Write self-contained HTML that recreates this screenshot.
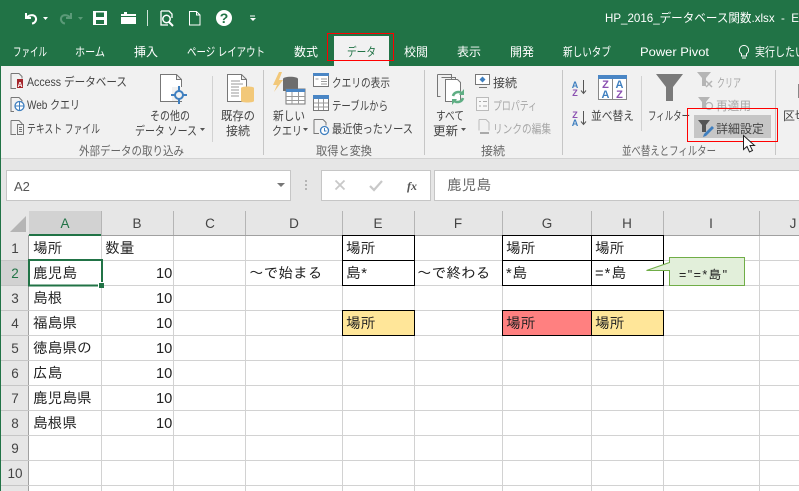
<!DOCTYPE html>
<html lang="ja"><head><meta charset="utf-8"><style>
html,body{margin:0;padding:0;width:799px;height:491px;overflow:hidden;background:#fff}
svg{display:block;position:absolute;left:0;top:0}
.r{font-family:"Liberation Sans","Noto Sans CJK JP",sans-serif;font-size:12px;fill:#444}
.t{font-family:"Liberation Sans","Noto Sans CJK JP",sans-serif;font-size:12px;fill:#fff}
.g{fill:#a6a6a6}
.c{font-family:"Liberation Sans","IPAGothic",sans-serif;font-size:14.67px;fill:#222}
.h{font-family:"Liberation Sans","Noto Sans CJK JP",sans-serif;font-size:13.5px;fill:#444;text-anchor:middle}
</style></head><body>
<svg width="799" height="491" viewBox="0 0 799 491" xmlns="http://www.w3.org/2000/svg">
<rect width="799" height="491" fill="#fff"/>
<!-- title bar -->
<rect width="799" height="66" fill="#217346"/>
<!-- QAT -->
<path d="M26 13v5h5M26.500 18c2-3 7-4 9-1 1.500 2.500 0 6-3.500 6.500" fill="none" stroke="#fff" stroke-width="2"/>
<path d="M43 17h5l-2.500 3z" fill="#fff"/>
<path d="M71 13v5h-5M70.500 18c-2-3-7-4-9-1-1.500 2.500 0 6 3.500 6.500" fill="none" stroke="#5b9a78" stroke-width="2"/>
<path d="M78 17h5l-2.500 3z" fill="#5b9a78"/>
<path d="M93 11h14v14h-14z M96 12.500v4.500h8v-4.500z M96 20v4h8v-4z" fill="#fff" fill-rule="evenodd"/>
<path d="M121 14h3v-2h3v2h9v10h-15z" fill="#fff"/><path d="M121 16.500h15" stroke="#217346"/>
<rect x="147" y="10" width="1" height="16" fill="#cfe3d8"/>
<path d="M161 11h8l3 3v4M161 11v14h7" fill="none" stroke="#fff" stroke-width="1.300"/>
<circle cx="166.500" cy="19" r="3.700" fill="none" stroke="#fff" stroke-width="1.500"/><path d="M169 22l4 4" stroke="#fff" stroke-width="2"/>
<path d="M189.500 11.500h7l3.500 3.500v10h-10.500zM196.500 11.500v3.500h3.500" fill="none" stroke="#fff"/>
<circle cx="224" cy="18" r="8" fill="#fff"/>
<text x="224" y="23" text-anchor="middle" font-family="Liberation Sans" font-weight="bold" font-size="14" fill="#217346">?</text>
<path d="M250 15.500h5v1h-5z M250 18h6l-3 3z" fill="#fff"/>
<text class="t" x="605" y="22" textLength="194" lengthAdjust="spacingAndGlyphs" xml:space="preserve">HP_2016_データベース関数.xlsx  -  E</text>
<!-- tabs -->
<rect x="334" y="36" width="55" height="30" fill="#f1f1f1"/>
<text class="t" x="13" y="56" textLength="34" lengthAdjust="spacingAndGlyphs">ファイル</text>
<text class="t" x="75" y="56" textLength="30" lengthAdjust="spacingAndGlyphs">ホーム</text>
<text class="t" x="134" y="56" textLength="24" lengthAdjust="spacingAndGlyphs">挿入</text>
<text class="t" x="187" y="56" textLength="78" lengthAdjust="spacingAndGlyphs">ページ レイアウト</text>
<text class="t" x="294" y="56" textLength="24" lengthAdjust="spacingAndGlyphs">数式</text>
<text class="t" x="347" y="56" textLength="29" lengthAdjust="spacingAndGlyphs" style="fill:#217346">データ</text>
<text class="t" x="404" y="56" textLength="24" lengthAdjust="spacingAndGlyphs">校閲</text>
<text class="t" x="457" y="56" textLength="24" lengthAdjust="spacingAndGlyphs">表示</text>
<text class="t" x="510" y="56" textLength="24" lengthAdjust="spacingAndGlyphs">開発</text>
<text class="t" x="563" y="56" textLength="48" lengthAdjust="spacingAndGlyphs">新しいタブ</text>
<text class="t" x="640" y="56" textLength="69" lengthAdjust="spacingAndGlyphs">Power Pivot</text>
<path d="M744 45.500a4.500 4.500 0 0 1 2.500 8.300v2.200h-5v-2.200a4.500 4.500 0 0 1 2.500-8.300zM742 58h4" fill="none" stroke="#fff"/>
<text class="t" x="755" y="56" textLength="50" lengthAdjust="spacingAndGlyphs">実行したい</text>
<rect x="327.500" y="33.500" width="66" height="27" fill="none" stroke="#f00" stroke-width="1"/>
<!-- ribbon -->
<rect y="66" width="799" height="92" fill="#f1f1f1"/>
<rect y="158" width="799" height="1" fill="#d2d2d2"/>
<rect y="159" width="799" height="52" fill="#e6e6e6"/>
<rect x="263" y="70" width="1" height="85" fill="#c6c6c6"/>
<rect x="424" y="70" width="1" height="85" fill="#c6c6c6"/>
<rect x="562" y="70" width="1" height="85" fill="#c6c6c6"/>
<rect x="775" y="70" width="1" height="85" fill="#c6c6c6"/>
<rect x="212" y="76" width="1" height="66" fill="#d2d2d2"/>
<rect x="641" y="76" width="1" height="55" fill="#d2d2d2"/>
<!-- left group icons -->
<path d="M11 73.500h8l3 3v2M11 73.500v15h5" fill="none" stroke="#777"/>
<rect x="17" y="79" width="6" height="9" fill="#a4262c"/><text x="20" y="87" text-anchor="middle" font-size="7" font-family="Liberation Sans" font-weight="bold" fill="#fff">A</text>
<path d="M11 97.500h8l3 3v1M11 97.500v14h3" fill="none" stroke="#777"/>
<circle cx="19.500" cy="106" r="4.500" fill="#fff" stroke="#3f7fbf" stroke-width="1.300"/><path d="M15 106h9M19.500 101.500v9" stroke="#3f7fbf"/>
<path d="M11 120.500h8l3 3v1M11 120.500v14h5" fill="none" stroke="#777"/>
<path d="M17.500 124.500h6v10h-6zM19 127.500h3M19 129.500h3M19 131.500h3" fill="none" stroke="#777"/>
<text class="r" x="27" y="86" textLength="100" lengthAdjust="spacingAndGlyphs">Access データベース</text>
<text class="r" x="27" y="109" textLength="53" lengthAdjust="spacingAndGlyphs">Web クエリ</text>
<text class="r" x="27" y="133" textLength="73" lengthAdjust="spacingAndGlyphs">テキスト ファイル</text>
<path d="M160.500 74.500h16l5 5v22h-21zM176.500 74.500v5h5" fill="#fff" stroke="#777"/>
<rect x="172" y="87" width="14" height="14" fill="#f1f1f1"/>
<circle cx="179" cy="95" r="4" fill="none" stroke="#3f7fbf" stroke-width="2"/>
<path d="M179 86v5M179 99v5M171 95h4M183 95h4" stroke="#3f7fbf" stroke-width="2"/>
<text class="r" x="150" y="120" textLength="40" lengthAdjust="spacingAndGlyphs">その他の</text>
<text class="r" x="135" y="135" textLength="62" lengthAdjust="spacingAndGlyphs">データ ソース</text>
<path d="M200 128h5l-2.500 3z" fill="#555"/>
<path d="M227.500 74.500h14l5 5v22h-19zM241.500 74.500v5h5" fill="#fff" stroke="#777"/>
<path d="M231 81h9M231 84h12M231 87h8M231 90h8M231 93h8M231 96h8" stroke="#999"/>
<path d="M241 88c0-2 13-2 13 0v13c0 2-13 2-13 0z" fill="#f2c879"/>
<text class="r" x="221" y="120" textLength="34" lengthAdjust="spacingAndGlyphs">既存の</text>
<text class="r" x="226" y="135" textLength="24" lengthAdjust="spacingAndGlyphs">接続</text>
<text class="r" x="79" y="155" textLength="105" lengthAdjust="spacingAndGlyphs" style="fill:#666">外部データの取り込み</text>
<!-- query group -->
<path d="M279 72l-6 13h4l-3 7 9-12h-4l3-8z" fill="#f2c879"/>
<path d="M283 79c0-3 15-3 15 0v12h-15z" fill="#6d6d6d"/>
<rect x="286" y="89" width="19" height="15" fill="#fff" stroke="#777"/><rect x="286" y="89" width="19" height="3" fill="#4a86c5"/>
<path d="M292 92v12M298.500 92v12M286 96.500h19M286 100.500h19" stroke="#999"/>
<text class="r" x="273" y="120" textLength="32" lengthAdjust="spacingAndGlyphs">新しい</text>
<text class="r" x="272" y="135" textLength="30" lengthAdjust="spacingAndGlyphs">クエリ</text>
<path d="M303 128h5l-2.500 3z" fill="#555"/>
<rect x="313.500" y="73.500" width="15" height="13" fill="#fff" stroke="#777"/><rect x="313" y="73" width="16" height="3" fill="#4a86c5"/>
<path d="M321 79h6M321 81.500h6M321 84h6M315.500 79h3" stroke="#999"/>
<rect x="313.500" y="95.500" width="15" height="15" fill="#fff" stroke="#777"/><rect x="313" y="95" width="16" height="4" fill="#4a86c5"/>
<path d="M318.500 99v11M323.500 99v11M314 103h14M314 107h14" stroke="#999"/>
<path d="M314 119.500h9l3 3v3M314 119.500v14h5" fill="none" stroke="#777"/>
<circle cx="324.500" cy="130.500" r="4" fill="#fff" stroke="#3f7fbf" stroke-width="1.300"/><path d="M324.500 128v3h2" fill="none" stroke="#3f7fbf"/>
<text class="r" x="332" y="87" textLength="58" lengthAdjust="spacingAndGlyphs">クエリの表示</text>
<text class="r" x="332" y="110" textLength="56" lengthAdjust="spacingAndGlyphs">テーブルから</text>
<text class="r" x="332" y="133" textLength="81" lengthAdjust="spacingAndGlyphs">最近使ったソース</text>
<text class="r" x="316" y="155" textLength="56" lengthAdjust="spacingAndGlyphs" style="fill:#666">取得と変換</text>
<!-- connection group -->
<path d="M437.500 74.500h14v25M441.500 77.500h14v25M437.500 74.500v22h3" fill="none" stroke="#777"/>
<path d="M445.500 79.500h12l3 3v19h-15z" fill="#fff" stroke="#777"/>
<path d="M453 96a5.500 5.500 0 0 1 9.500-2M463 98a5.500 5.500 0 0 1-9.500 2" fill="none" stroke="#5fae84" stroke-width="2.600"/>
<path d="M464 89v6h-5zM452 105v-6h5z" fill="#5fae84"/>
<text class="r" x="436" y="120" textLength="28" lengthAdjust="spacingAndGlyphs">すべて</text>
<text class="r" x="433" y="135" textLength="25" lengthAdjust="spacingAndGlyphs">更新</text>
<path d="M461 128h5l-2.500 3z" fill="#555"/>
<rect x="475.500" y="74.500" width="14" height="10" fill="#fff" stroke="#777"/><path d="M479 87.500h8" stroke="#777"/>
<path d="M482.500 76.500l3 3-3 3-3-3z" fill="#3f7fbf"/>
<rect x="476.500" y="97.500" width="12" height="13" fill="#f7f7f7" stroke="#bbb"/><path d="M479 101.500h2M483 101.500h4M479 106h2M483 106h4" stroke="#aaa"/>
<path d="M479 119.500h7l3 3v8M479 119.500v11" fill="none" stroke="#bbb"/><path d="M480 133h9" stroke="#aaa" stroke-width="2"/>
<text class="r" x="493" y="87" textLength="24" lengthAdjust="spacingAndGlyphs">接続</text>
<text class="r g" x="493" y="110" textLength="44" lengthAdjust="spacingAndGlyphs">プロパティ</text>
<text class="r g" x="493" y="133" textLength="58" lengthAdjust="spacingAndGlyphs">リンクの編集</text>
<text class="r" x="481" y="155" textLength="24" lengthAdjust="spacingAndGlyphs" style="fill:#666">接続</text>
<!-- sort group -->
<g font-family="Liberation Sans" font-weight="bold" font-size="9" text-anchor="middle">
<text x="575" y="88" fill="#3f7fbf">A</text><text x="575" y="96" fill="#8a4fb0">Z</text>
<text x="575" y="118" fill="#8a4fb0">Z</text><text x="575" y="126" fill="#3f7fbf">A</text></g>
<path d="M583.500 80v13M581 90.500l2.500 3 2.500-3M583.500 111v13M581 121.500l2.500 3 2.500-3" fill="none" stroke="#555"/>
<rect x="598.500" y="75.500" width="28" height="24" fill="#fff" stroke="#888"/><rect x="598" y="75" width="29" height="4" fill="#4a86c5"/><path d="M612.500 79v20" stroke="#888"/>
<g font-family="Liberation Sans" font-weight="bold" font-size="11" text-anchor="middle">
<text x="605.500" y="88" fill="#8a4fb0">Z</text><text x="605.500" y="98" fill="#3f7fbf">A</text>
<text x="619.500" y="88" fill="#3f7fbf">A</text><text x="619.500" y="98" fill="#8a4fb0">Z</text></g>
<text class="r" x="591" y="120" textLength="43" lengthAdjust="spacingAndGlyphs">並べ替え</text>
<path d="M656 74h27l-10 13v14h-7v-14z" fill="#7a7a7a"/>
<text class="r" x="648" y="120" textLength="42" lengthAdjust="spacingAndGlyphs">フィルター</text>
<path d="M697 72h14l-5 6v8h-4v-8z" fill="#b5b5b5"/><path d="M706 81l6 6M712 81l-6 6" stroke="#b5b5b5" stroke-width="1.500"/>
<path d="M698 97h12l-4 5v7h-4v-7z" fill="#b5b5b5"/><circle cx="709" cy="106" r="3.500" fill="none" stroke="#b5b5b5" stroke-width="1.300"/>
<text class="r g" x="717" y="87" textLength="24" lengthAdjust="spacingAndGlyphs">クリア</text>
<text class="r g" x="716" y="110" textLength="35" lengthAdjust="spacingAndGlyphs">再適用</text>
<rect x="694" y="115" width="77" height="23" fill="#c6c6c6"/>
<path d="M698 120h12l-4 5v7h-4v-7z" fill="#555"/><path d="M704 134l8-8 2 2-8 8-3 1z" fill="#3f7fbf"/>
<text class="r" x="716" y="133" textLength="48" lengthAdjust="spacingAndGlyphs">詳細設定</text>
<text class="r" x="622" y="155" textLength="94" lengthAdjust="spacingAndGlyphs" style="fill:#666">並べ替えとフィルター</text>
<rect x="687.500" y="108.500" width="90" height="33" fill="none" stroke="#f00" stroke-width="1"/>
<path d="M743.500 135.500v14l3.500-3 2.500 5.500 3-1.500-2.500-5h4.500z" fill="#fff" stroke="#222"/>
<rect x="798" y="84" width="1" height="14" fill="#888"/>
<text class="r" x="783" y="120" textLength="24" lengthAdjust="spacingAndGlyphs">区切</text>
<!-- formula bar -->
<rect x="6.500" y="170.500" width="284" height="30" fill="#fff" stroke="#c6c6c6"/>
<text class="r" x="14" y="191" style="font-size:13px;fill:#555">A2</text>
<path d="M277 183h8l-4 4z" fill="#777"/>
<path d="M305 180h2v2h-2zM305 184h2v2h-2zM305 188h2v2h-2z" fill="#b5b5b5"/>
<rect x="321.500" y="170.500" width="109" height="30" fill="#fff" stroke="#c6c6c6"/>
<rect x="434.500" y="170.500" width="366" height="30" fill="#fff" stroke="#c6c6c6"/>
<path d="M335.500 180.500l9 9M344.500 180.500l-9 9" stroke="#c8c8c8" stroke-width="1.800"/>
<path d="M370 186l4 4 8-9" fill="none" stroke="#c8c8c8" stroke-width="2.200"/>
<text x="407" y="190" font-family="Liberation Serif" font-style="italic" font-weight="bold" font-size="12" fill="#555">fx</text>
<text class="c" x="447" y="190" style="fill:#666">鹿児島</text>
<!-- grid headers -->
<rect x="1" y="211" width="798" height="24" fill="#e6e6e6"/>
<rect x="1" y="235" width="28" height="256" fill="#e6e6e6"/>
<rect x="29" y="211" width="72" height="24" fill="#d2d2d2"/>
<rect x="1" y="260" width="28" height="25" fill="#d2d2d2"/>
<path d="M10 232L26 216v16z" fill="#b5b5b5"/>
<rect x="29" y="235" width="770" height="1" fill="#a0a0a0"/>
<rect x="29" y="234" width="72" height="2" fill="#217346"/>
<rect x="28" y="235" width="1" height="256" fill="#a0a0a0"/>
<g fill="#b5b5b5">
<rect x="101" y="211" width="1" height="24"/><rect x="173" y="211" width="1" height="24"/><rect x="245" y="211" width="1" height="24"/><rect x="342" y="211" width="1" height="24"/><rect x="414" y="211" width="1" height="24"/><rect x="502" y="211" width="1" height="24"/><rect x="591" y="211" width="1" height="24"/><rect x="663" y="211" width="1" height="24"/><rect x="759" y="211" width="1" height="24"/>
</g>
<g fill="#d2d2d2">
<rect x="101" y="236" width="1" height="255"/><rect x="173" y="236" width="1" height="255"/><rect x="245" y="236" width="1" height="255"/><rect x="342" y="236" width="1" height="255"/><rect x="414" y="236" width="1" height="255"/><rect x="502" y="236" width="1" height="255"/><rect x="591" y="236" width="1" height="255"/><rect x="663" y="236" width="1" height="255"/><rect x="759" y="236" width="1" height="255"/>
<rect x="29" y="260" width="770" height="1"/><rect x="29" y="285" width="770" height="1"/><rect x="29" y="310" width="770" height="1"/><rect x="29" y="335" width="770" height="1"/><rect x="29" y="360" width="770" height="1"/><rect x="29" y="385" width="770" height="1"/><rect x="29" y="410" width="770" height="1"/><rect x="29" y="435" width="770" height="1"/><rect x="29" y="460" width="770" height="1"/><rect x="29" y="485" width="770" height="1"/>
</g>
<g fill="#c6c6c6"><rect x="1" y="260" width="28" height="1"/><rect x="1" y="285" width="28" height="1"/><rect x="1" y="310" width="28" height="1"/><rect x="1" y="335" width="28" height="1"/><rect x="1" y="360" width="28" height="1"/><rect x="1" y="385" width="28" height="1"/><rect x="1" y="410" width="28" height="1"/><rect x="1" y="435" width="28" height="1"/><rect x="1" y="460" width="28" height="1"/><rect x="1" y="485" width="28" height="1"/></g>
<rect x="0" y="66" width="1" height="425" fill="#217346"/>
<g>
<text class="h" x="65" y="228" style="fill:#217346">A</text><text class="h" x="137" y="228">B</text><text class="h" x="210" y="228">C</text><text class="h" x="294" y="228">D</text><text class="h" x="378" y="228">E</text><text class="h" x="458" y="228">F</text><text class="h" x="547" y="228">G</text><text class="h" x="627" y="228">H</text><text class="h" x="711" y="228">I</text><text class="h" x="793" y="228">J</text>
<text class="h" x="15" y="253">1</text><text class="h" x="15" y="278" style="fill:#217346">2</text><text class="h" x="15" y="303">3</text><text class="h" x="15" y="328">4</text><text class="h" x="15" y="353">5</text><text class="h" x="15" y="378">6</text><text class="h" x="15" y="403">7</text><text class="h" x="15" y="428">8</text><text class="h" x="15" y="453">9</text><text class="h" x="15" y="478">10</text>
</g>
<!-- coloured cells and borders -->
<rect x="342" y="310" width="72" height="25" fill="#ffe699"/>
<rect x="502" y="310" width="89" height="25" fill="#ff8080"/>
<rect x="591" y="310" width="72" height="25" fill="#ffe699"/>
<g fill="none" stroke="#000">
<rect x="342.500" y="235.500" width="72" height="25"/><rect x="342.500" y="260.500" width="72" height="25"/>
<rect x="342.500" y="310.500" width="72" height="25"/>
<rect x="502.500" y="235.500" width="89" height="25"/><rect x="502.500" y="260.500" width="89" height="25"/>
<rect x="591.500" y="235.500" width="72" height="25"/><rect x="591.500" y="260.500" width="72" height="25"/>
<rect x="502.500" y="310.500" width="89" height="25"/><rect x="591.500" y="310.500" width="72" height="25"/>
</g>
<!-- selection -->
<rect x="29" y="260" width="73" height="25.500" fill="none" stroke="#217346" stroke-width="2"/>
<rect x="98" y="282" width="6" height="6" fill="#fff"/><rect x="99" y="283" width="5" height="5" fill="#217346"/>
<!-- cells -->
<text class="c" x="33" y="253">場所</text><text class="c" x="105" y="253">数量</text>
<text class="c" x="33" y="278">鹿児島</text><text class="c" x="33" y="303">島根</text><text class="c" x="33" y="328">福島県</text><text class="c" x="33" y="353">徳島県の</text><text class="c" x="33" y="378">広島</text><text class="c" x="33" y="403">鹿児島県</text><text class="c" x="33" y="428">島根県</text>
<text class="c" x="156" y="278">10</text><text class="c" x="156" y="303">10</text><text class="c" x="156" y="328">10</text><text class="c" x="156" y="353">10</text><text class="c" x="156" y="378">10</text><text class="c" x="156" y="403">10</text><text class="c" x="156" y="428">10</text>
<text class="c" x="249" y="278">～で始まる</text>
<text class="c" x="346" y="253">場所</text><text class="c" x="346" y="278" textLength="21" lengthAdjust="spacing">島*</text><text class="c" x="346" y="328">場所</text>
<text class="c" x="417" y="278">～で終わる</text>
<text class="c" x="506" y="253">場所</text><text class="c" x="506" y="278" textLength="21" lengthAdjust="spacing">*島</text><text class="c" x="506" y="328">場所</text>
<text class="c" x="595" y="253">場所</text><text class="c" x="595" y="278" textLength="31" lengthAdjust="spacing">=*島</text><text class="c" x="595" y="328">場所</text>
<!-- callout -->
<path d="M669.500 257.500h75v28h-75v-15h-23l23-8z" fill="#e2efda" stroke="#70ad47"/>
<text class="c" x="679" y="279" textLength="48" lengthAdjust="spacing" style="font-size:12.500px">="=*島"</text>
</svg>
</body></html>
